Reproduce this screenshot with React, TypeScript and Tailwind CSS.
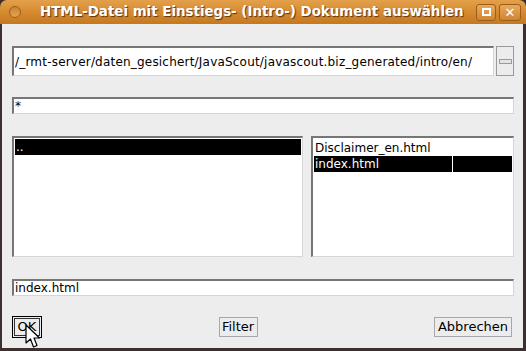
import React from "react";

const sunken =
  "bg-white border-t-2 border-l-2 border-b border-r border-t-[#767676] border-l-[#767676] border-b-[#d6d6d6] border-r-[#d6d6d6]";

const Field = ({ value, h, wide }: { value: string; h: string; wide?: boolean }) => (
  <div
    className={`${sunken} ${h} flex items-center pl-[1px] text-[12px] text-black whitespace-nowrap overflow-hidden ${
      wide ? "tracking-[0.2px]" : ""
    }`}
  >
    {value}
  </div>
);

const Button = ({ label, w }: { label: string; w: string }) => (
  <div
    className={`${w} h-[20px] flex items-center justify-center bg-[#ececec] border border-[#a8a8a8] text-[13px] text-black`}
  >
    {label}
  </div>
);

const Cursor = () => (
  <svg className="absolute left-[25px] top-[324px]" width="16" height="26" viewBox="0 0 16 26">
    <path
      d="M1 1 L1 19 L5.5 15 L8.5 23 L12 21.5 L9 14 L14.5 14 Z"
      fill="white"
      stroke="black"
      strokeWidth="1.2"
      strokeLinejoin="round"
    />
  </svg>
);

export default function App() {
  return (
    <div
      className="relative w-[526px] h-[351px] bg-[#3b2f2f] flex flex-col overflow-hidden"
      style={{ fontFamily: '"DejaVu Sans", sans-serif' }}
    >
      {/* title bar */}
      <div className="h-[24px] shrink-0 rounded-t-[7px] bg-gradient-to-b from-[#e4a04a] via-[#d68b30] to-[#c47820] flex items-center pl-[9px] pr-[5px]">
        <div className="w-[12px] h-[12px] rounded-full border border-[#9a5e1c] bg-gradient-to-b from-[#c98434] to-[#e6a452]" />
        <div
          className="ml-[19px] flex-1 min-w-0 text-white font-bold text-[13.4px] whitespace-nowrap overflow-hidden"
          style={{ textShadow: "1px 1px 1px #5a3510" }}
        >
          HTML-Datei mit Einstiegs- (Intro-) Dokument auswählen
        </div>
        <div className="flex gap-[3px] shrink-0">
          <div className="w-[20px] h-[17px] rounded-[3px] border border-[#9a5e1c] bg-gradient-to-b from-[#e8aa58] to-[#cf8530] flex items-center justify-center">
            <div className="w-[9px] h-[8px] border-2 border-white" />
          </div>
          <div className="w-[22px] h-[17px] rounded-[3px] border border-[#9a5e1c] bg-gradient-to-b from-[#e8aa58] to-[#cf8530] flex items-center justify-center text-white font-bold text-[13px] leading-none">
            ✕
          </div>
        </div>
      </div>

      {/* body */}
      <div className="flex-1 bg-[#ededed] border-l-2 border-r-[3px] border-b-[3px] border-[#3b2f2f] flex flex-col pl-[10px] pr-[9px] pt-[22px]">
        <div className="flex h-[30px] gap-[2px]">
          <div className="flex-1 min-w-0">
            <Field value="/_rmt-server/daten_gesichert/JavaScout/javascout.biz_generated/intro/en/" h="h-[30px]" wide />
          </div>
          <div className="w-[18px] h-[30px] border border-[#9a9a9a] bg-[#ececec] flex items-center justify-center">
            <div className="w-[13px] h-[5px] border border-[#9a9a9a] bg-[#e4e4e4]" />
          </div>
        </div>

        <div className="mt-[21px]">
          <Field value="*" h="h-[17px]" />
        </div>

        <div className="mt-[22px] flex h-[121px] gap-[8px]">
          <div className={`${sunken} w-[291px] pt-[1px] px-[1px] text-[12px]`}>
            <div className="h-[16px] bg-black text-white pl-[1px] leading-[16px]">..</div>
          </div>
          <div className={`${sunken} flex-1 pt-[2px] px-[1px] text-[12px] text-black leading-[16px]`}>
            <div className="h-[16px] pl-[1px]">Disclaimer_en.html</div>
            <div className="h-[16px] bg-black text-white pl-[1px] flex">
              <span className="w-[137px]">index.html</span>
              <span className="w-px h-full bg-white" />
            </div>
          </div>
        </div>

        <div className="mt-[22px]">
          <Field value="index.html" h="h-[17px]" />
        </div>

        <div className="mt-[20px] flex justify-between items-center pr-[2px]">
          <div className="border border-black p-px">
            <div className="w-[26px] h-[18px] border border-[#333] bg-[#ececec] flex items-center justify-center text-[13px] text-black">
              OK
            </div>
          </div>
          <Button label="Filter" w="w-[39px]" />
          <Button label="Abbrechen" w="w-[78px]" />
        </div>
      </div>
      <Cursor />
    </div>
  );
}
